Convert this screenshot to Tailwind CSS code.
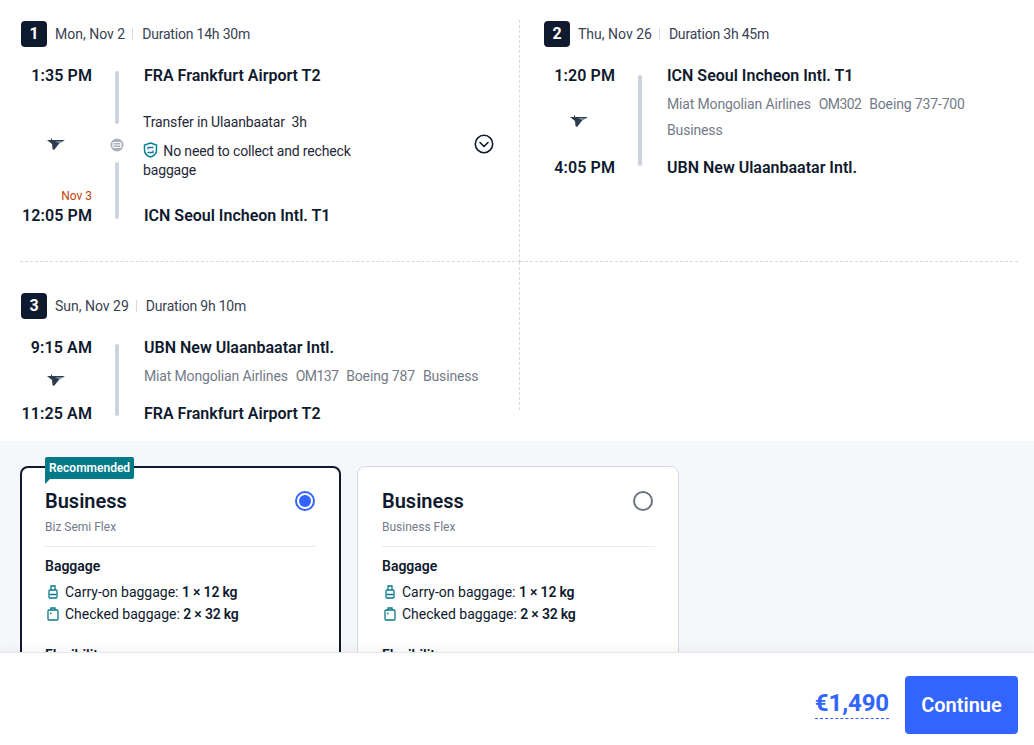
<!DOCTYPE html>
<html lang="en">
<head>
  <meta charset="UTF-8" />
  <meta name="viewport" content="width=device-width, initial-scale=1.0" />
  <title>Flight details</title>
  <script src="https://cdn.jsdelivr.net/npm/@tailwindcss/browser@4"></script>
</head>
<body class="bg-white h-[745px] overflow-hidden relative font-['Roboto',sans-serif] text-[#0f1a2e] text-sm">

  <!-- itinerary -->
  <div class="pl-5 pr-4 pt-5 h-[441px]">
    <div class="grid grid-cols-[500px_1fr] grid-rows-[242px_148px]">

      <!-- leg 1 -->
      <div class="border-r border-b border-dashed border-[#d9d9d9] pl-px pt-px">
        <div class="flex items-center h-[26px]">
          <span class="w-[26px] h-[26px] rounded bg-[#0f1a2e] text-white font-bold text-base flex items-center justify-center">1</span>
          <span class="ml-2 text-[#3a4252]">Mon, Nov 2</span>
          <span class="w-px h-3 bg-[#d5d9e0] mx-[7px]"></span>
          <span class="ml-[2px] text-[#3a4252] tracking-[-0.2px]">Duration 14h 30m</span>
        </div>
        <div class="flex mt-[17px] h-[164px]">
          <div class="w-[71px] flex flex-col items-end">
            <span class="text-base leading-6 font-semibold tracking-[0.1px]">1:35 PM</span>
            <svg class="self-center mr-px mt-[50px]" width="18" height="13" viewBox="0 0 18 13"><path d="M0 2h4V0.500h1V2h13l-5 2.500-6 7.500-1.500-1-.5-5z" fill="#2f3a4d"/><path d="M8 3h9l-5 2.500z" fill="#6d8a96"/></svg>
            <span class="mt-auto text-xs leading-4 text-[#c2410c]">Nov 3</span>
            <span class="text-base leading-6 font-semibold tracking-[0.1px]">12:05 PM</span>
          </div>
          <div class="w-[52px] pr-[2px] flex flex-col items-center pt-[7px]">
            <span class="w-1 h-[53px] rounded-full bg-[#ced4dd]"></span>
            <svg class="mt-[14px]" width="14" height="14" viewBox="0 0 14 14"><circle cx="7" cy="7" r="6.500" fill="#a9b0bb"/><rect x="3" y="4.500" width="8" height="5" rx="1" fill="none" stroke="#fff" stroke-width="1.200"/><path d="M3 7h8" stroke="#fff"/></svg>
            <span class="w-1 h-[57px] mt-[10px] rounded-full bg-[#ced4dd]"></span>
          </div>
          <div class="w-[350px] flex flex-col">
            <div class="text-base leading-6 font-semibold">FRA Frankfurt Airport T2</div>
            <div class="flex items-center justify-between mt-6 -ml-px">
              <div class="w-[225px] text-[#1f2838] tracking-[-0.15px]">
                <div class="leading-5">Transfer in Ulaanbaatar&nbsp; 3h</div>
                <div class="mt-[10px] leading-[19px]">
                  <svg class="inline-block align-[-2px] mr-[2px]" width="15" height="16" viewBox="0 0 15 16" fill="none"><path d="M7.500 1 13.500 3v5c0 3.500-2.500 5.800-6 7-3.500-1.200-6-3.500-6-7V3z" stroke="#00838f" stroke-width="1.500"/><path d="M10.500 5.500h-5.500v2M4.500 10.500h5.500v-2" stroke="#2a6fb0" stroke-width="1.300"/></svg>
                  No need to collect and recheck baggage
                </div>
              </div>
              <svg class="mb-[5px]" width="20" height="20" viewBox="0 0 20 20" fill="none"><circle cx="10" cy="10" r="8.700" stroke="#0f1a2e" stroke-width="1.600"/><path d="m6 8.500 4 4 4-4" stroke="#0f1a2e" stroke-width="1.600" stroke-linecap="round" stroke-linejoin="round"/></svg>
            </div>
            <div class="mt-auto text-base leading-6 font-semibold">ICN Seoul Incheon Intl. T1</div>
          </div>
        </div>
      </div>

      <!-- leg 2 -->
      <div class="border-b border-dashed border-[#d9d9d9] pl-6 pt-px">
        <div class="flex items-center h-[26px]">
          <span class="w-[26px] h-[26px] rounded bg-[#0f1a2e] text-white font-bold text-base flex items-center justify-center">2</span>
          <span class="ml-2 text-[#3a4252]">Thu, Nov 26</span>
          <span class="w-px h-3 bg-[#d5d9e0] mx-[7px]"></span>
          <span class="ml-[2px] text-[#3a4252] tracking-[-0.2px]">Duration 3h 45m</span>
        </div>
        <div class="flex mt-[17px] h-[116px]">
          <div class="w-[71px] flex flex-col items-end">
            <span class="text-base leading-6 font-semibold tracking-[0.1px]">1:20 PM</span>
            <svg class="self-center mr-px mt-[27px]" width="18" height="13" viewBox="0 0 18 13"><path d="M0 2h4V0.500h1V2h13l-5 2.500-6 7.500-1.500-1-.5-5z" fill="#2f3a4d"/><path d="M8 3h9l-5 2.500z" fill="#6d8a96"/></svg>
            <span class="mt-auto text-base leading-6 font-semibold tracking-[0.1px]">4:05 PM</span>
          </div>
          <div class="w-[52px] pr-[2px] flex flex-col items-center pt-[11px]">
            <span class="w-1 h-[91px] rounded-full bg-[#ced4dd]"></span>
          </div>
          <div class="w-[320px] flex flex-col">
            <div class="text-base leading-6 font-semibold">ICN Seoul Incheon Intl. T1</div>
            <div class="mt-[3px] flex flex-wrap leading-[26px] text-[#747b88] tracking-[-0.15px]">
              <span class="mr-2">Miat Mongolian Airlines</span><span class="mr-2 tracking-[-0.6px]">OM302</span><span class="mr-2">Boeing 737-700</span><span>Business</span>
            </div>
            <div class="mt-auto text-base leading-6 font-semibold">UBN New Ulaanbaatar Intl.</div>
          </div>
        </div>
      </div>

      <!-- leg 3 -->
      <div class="border-r border-dashed border-[#d9d9d9] pl-px pt-[31px]">
        <div class="flex items-center h-[26px]">
          <span class="w-[26px] h-[26px] rounded bg-[#0f1a2e] text-white font-bold text-base flex items-center justify-center">3</span>
          <span class="ml-2 text-[#3a4252]">Sun, Nov 29</span>
          <span class="w-px h-3 bg-[#d5d9e0] mx-[7px]"></span>
          <span class="ml-[2px] text-[#3a4252] tracking-[-0.2px]">Duration 9h 10m</span>
        </div>
        <div class="flex mt-[17px] h-[90px]">
          <div class="w-[71px] flex flex-col items-end">
            <span class="text-base leading-6 font-semibold tracking-[0.1px]">9:15 AM</span>
            <svg class="self-center mr-px mt-[14px]" width="18" height="13" viewBox="0 0 18 13"><path d="M0 2h4V0.500h1V2h13l-5 2.500-6 7.500-1.500-1-.5-5z" fill="#2f3a4d"/><path d="M8 3h9l-5 2.500z" fill="#6d8a96"/></svg>
            <span class="mt-auto text-base leading-6 font-semibold tracking-[0.1px]">11:25 AM</span>
          </div>
          <div class="w-[52px] pr-[2px] flex flex-col items-center pt-2">
            <span class="w-1 h-[72px] rounded-full bg-[#ced4dd]"></span>
          </div>
          <div class="flex-1 flex flex-col">
            <div class="text-base leading-6 font-semibold">UBN New Ulaanbaatar Intl.</div>
            <div class="mt-[3px] flex flex-wrap leading-[26px] text-[#747b88] tracking-[-0.15px]">
              <span class="mr-2">Miat Mongolian Airlines</span><span class="mr-2 tracking-[-0.6px]">OM137</span><span class="mr-2">Boeing 787</span><span>Business</span>
            </div>
            <div class="mt-auto text-base leading-6 font-semibold">FRA Frankfurt Airport T2</div>
          </div>
        </div>
      </div>
      <div></div>
    </div>
  </div>

  <!-- fare cards -->
  <div class="bg-[#f5f7fa] h-[304px] pt-[25px] pl-5 flex gap-4 items-start">
    <div class="relative w-[321px] h-[300px] bg-white border-2 border-[#0f1a2e] rounded-lg px-[23px] pt-[19px]">
      <div class="absolute left-[23px] -top-[11px] h-[22px] bg-[#007a87] text-white text-xs font-semibold leading-[22px] px-1 rounded-t-[2px] rounded-br-[2px]">Recommended</div>
      <div class="absolute left-[23px] top-[11px] w-0 h-0 border-t-[5px] border-r-[5px] border-t-[#007a87] border-r-transparent"></div>
      <div class="flex items-center justify-between">
        <span class="text-xl leading-7 font-semibold">Business</span>
        <span class="w-5 h-5 mr-px rounded-full border-2 border-[#3264ff] p-[2px]"><span class="block w-full h-full rounded-full bg-[#3264ff]"></span></span>
      </div>
      <div class="mt-1 text-xs leading-4 text-[#747b88]">Biz Semi Flex</div>
      <div class="mt-[11px] h-px bg-[#e8ebf0]"></div>
      <div class="mt-[9px] leading-5 font-semibold">Baggage</div>
      <div class="mt-[5px] leading-[22px] flex items-center">
        <svg class="ml-[2px] mr-[6px]" width="12" height="14" viewBox="0 0 12 14" fill="none" stroke="#0a7a8a" stroke-width="1.300"><rect x="2" y="5" width="8" height="8" rx="1"/><path d="M4 5V1h4v4M2.500 9.500h7"/></svg>
        <span>Carry-on baggage: <b class="font-semibold tracking-[-0.2px]">1 × 12 kg</b></span>
      </div>
      <div class="leading-[22px] flex items-center">
        <svg class="ml-[2px] mr-[6px]" width="12" height="14" viewBox="0 0 12 14" fill="none" stroke="#0a7a8a" stroke-width="1.300"><rect x="1" y="3" width="10" height="10" rx="1"/><path d="M4 3V1h4v2M3 6.500h1.500"/></svg>
        <span>Checked baggage: <b class="font-semibold tracking-[-0.2px]">2 × 32 kg</b></span>
      </div>
      <div class="mt-5 leading-5 font-semibold">Flexibility</div>
    </div>

    <div class="w-[322px] h-[300px] bg-white border border-[#d5d9e0] rounded-lg pl-6 pr-[23px] pt-5">
      <div class="flex items-center justify-between">
        <span class="text-xl leading-7 font-semibold">Business</span>
        <span class="w-5 h-5 mr-[2px] rounded-full border-2 border-[#6b7280]"></span>
      </div>
      <div class="mt-1 text-xs leading-4 text-[#747b88]">Business Flex</div>
      <div class="mt-[11px] h-px bg-[#e8ebf0]"></div>
      <div class="mt-[9px] leading-5 font-semibold">Baggage</div>
      <div class="mt-[5px] leading-[22px] flex items-center">
        <svg class="ml-[2px] mr-[6px]" width="12" height="14" viewBox="0 0 12 14" fill="none" stroke="#0a7a8a" stroke-width="1.300"><rect x="2" y="5" width="8" height="8" rx="1"/><path d="M4 5V1h4v4M2.500 9.500h7"/></svg>
        <span>Carry-on baggage: <b class="font-semibold tracking-[-0.2px]">1 × 12 kg</b></span>
      </div>
      <div class="leading-[22px] flex items-center">
        <svg class="ml-[2px] mr-[6px]" width="12" height="14" viewBox="0 0 12 14" fill="none" stroke="#0a7a8a" stroke-width="1.300"><rect x="1" y="3" width="10" height="10" rx="1"/><path d="M4 3V1h4v2M3 6.500h1.500"/></svg>
        <span>Checked baggage: <b class="font-semibold tracking-[-0.2px]">2 × 32 kg</b></span>
      </div>
      <div class="mt-5 leading-5 font-semibold">Flexibility</div>
    </div>
  </div>

  <!-- footer -->
  <div class="absolute left-0 right-0 bottom-0 h-[93px] bg-white border-t border-[#e3e6eb] shadow-[0_-4px_8px_rgba(15,26,46,0.04)] flex items-start justify-end pt-[23px] pr-4">
    <span class="mt-3 text-2xl leading-[30px] font-bold text-[#3264ff] tracking-[-0.1px] border-b border-dashed border-[#3264ff]">€1,490</span>
    <button class="ml-4 w-[113px] h-[58px] rounded bg-[#3264ff] text-white text-xl font-semibold">Continue</button>
  </div>
</body>
</html>
